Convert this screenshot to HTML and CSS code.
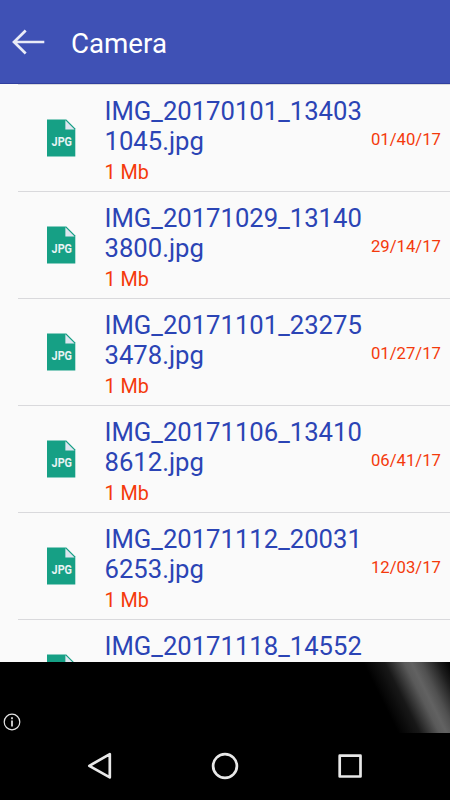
FILE: index.html
```html
<!DOCTYPE html>
<html lang="en">

<head>
    <meta charset="UTF-8">
    <meta name="viewport" content="width=device-width, initial-scale=1.0">
    <title>Camera</title>
    <link rel="stylesheet" href="styles.css">
</head>

<body>
    <!-- file icon shared by all rows -->
    <svg class="sprite" width="29" height="38">
        <symbol id="jpg" viewBox="0 0 29 38">
            <path d="M0 0.5H19.3L28.3 9.5V37.5H0Z" fill="#16a085"/>
            <path d="M18.4 1.2V10.4H27.6Z" fill="#dfe6f0"/>
            <text x="4.6" y="27.2" textLength="20.4" lengthAdjust="spacingAndGlyphs" fill="#e8f3f4" class="jpg-text">JPG</text>
        </symbol>
    </svg>

    <div class="app">
        <header class="toolbar">
            <svg class="back" width="34" height="26" viewBox="0 0 34 26">
                <path d="M32.3 13H2M13.7 1.5L2 13L13.7 24.5" fill="none" stroke="#e9ebf7" stroke-width="2.7"/>
            </svg>
            <h1>Camera</h1>
        </header>

        <ul class="file-list">
            <li class="file">
                <svg class="file-icon"><use href="#jpg"/></svg>
                <div class="file-info">
                    <div class="file-name">IMG_20170101_134031045.jpg</div>
                    <div class="file-size">1 Mb</div>
                </div>
                <span class="file-date">01/40/17</span>
            </li>
            <li class="file">
                <svg class="file-icon"><use href="#jpg"/></svg>
                <div class="file-info">
                    <div class="file-name">IMG_20171029_131403800.jpg</div>
                    <div class="file-size">1 Mb</div>
                </div>
                <span class="file-date">29/14/17</span>
            </li>
            <li class="file">
                <svg class="file-icon"><use href="#jpg"/></svg>
                <div class="file-info">
                    <div class="file-name">IMG_20171101_232753478.jpg</div>
                    <div class="file-size">1 Mb</div>
                </div>
                <span class="file-date">01/27/17</span>
            </li>
            <li class="file">
                <svg class="file-icon"><use href="#jpg"/></svg>
                <div class="file-info">
                    <div class="file-name">IMG_20171106_134108612.jpg</div>
                    <div class="file-size">1 Mb</div>
                </div>
                <span class="file-date">06/41/17</span>
            </li>
            <li class="file">
                <svg class="file-icon"><use href="#jpg"/></svg>
                <div class="file-info">
                    <div class="file-name">IMG_20171112_200316253.jpg</div>
                    <div class="file-size">1 Mb</div>
                </div>
                <span class="file-date">12/03/17</span>
            </li>
            <li class="file">
                <svg class="file-icon"><use href="#jpg"/></svg>
                <div class="file-info">
                    <div class="file-name">IMG_20171118_14552</div>
                </div>
            </li>
        </ul>

        <div class="banner">
            <svg width="18" height="18" viewBox="0 0 18 18">
                <circle cx="9" cy="9" r="7.8" fill="none" stroke="#e4e4e4" stroke-width="1.2"/>
                <path d="M9 7.5V13.5M9 4.3V6.2" stroke="#e4e4e4" stroke-width="1.7"/>
            </svg>
        </div>

        <nav class="navbar">
            <svg width="28" height="28" viewBox="0 0 28 28">
                <path d="M23.8 2.2V25.4L3.3 13.8Z"/>
            </svg>
            <svg width="28" height="28" viewBox="0 0 28 28">
                <circle cx="14" cy="14" r="11.9"/>
            </svg>
            <svg width="28" height="28" viewBox="0 0 28 28">
                <rect x="3.7" y="3.7" width="20.8" height="20.8"/>
            </svg>
        </nav>
    </div>
</body>
</html>
```
FILE: styles.css
```css
body {
    margin: 0;
    background-color: #000;
    font-family: Roboto, sans-serif;
}

.sprite {
    display: none;
}

.app {
    display: flex;
    flex-direction: column;
    width: 450px;
    height: 800px;
    overflow: hidden;
}

.toolbar {
    display: flex;
    align-items: center;
    height: 84px;
    padding-left: 12px;
    box-sizing: border-box;
    background-color: #3f51b5;
    border-bottom: 1px solid #303f9f;
}

.back {
    margin-top: 1px;
}

.toolbar h1 {
    margin: 4px 0 0 25px;
    color: #fff;
    font-size: 27.7px;
    font-weight: 400;
}

.file-list {
    list-style: none;
    margin: 0;
    padding: 0 0 0 18px;
    height: 578px;
    box-sizing: border-box;
    overflow: hidden;
    background-color: #fafafa;
}

.file {
    display: flex;
    height: 107px;
    padding: 11px 9px 0 29px;
    box-sizing: border-box;
    border-top: 1px solid #d9d9dc;
}

.file-icon {
    flex: none;
    width: 29px;
    height: 38px;
    margin-top: 23px;
}

.jpg-text {
    font-size: 12.5px;
    font-weight: 700;
}

.file-info {
    width: 262px;
    margin-left: 28.5px;
}

.file-name {
    color: #2b44b5;
    font-size: 25.65px;
    line-height: 30px;
    word-break: break-all;
}

.file-size {
    margin-top: 5px;
    color: #f4390b;
    font-size: 19.8px;
    line-height: 24px;
}

.file-date {
    margin: 34px 0 0 auto;
    color: #f4390b;
    font-size: 16.7px;
    line-height: 20px;
}

.banner {
    display: flex;
    align-items: flex-end;
    height: 71px;
    padding: 0 0 2px 3px;
    box-sizing: border-box;
    background: linear-gradient(63.4deg, #000 82%, #181818 86.5%, #5a5a5a 90.5%, #626262 92%, #505050 94%, #1c1c1c 97.5%, #000 100%);
}

.navbar {
    display: flex;
    justify-content: space-between;
    align-items: center;
    height: 67px;
    padding: 0 86px 1px;
    box-sizing: border-box;
}

.navbar svg {
    fill: none;
    stroke: #e8e8e8;
    stroke-width: 2.7;
    stroke-linejoin: round;
}
```
